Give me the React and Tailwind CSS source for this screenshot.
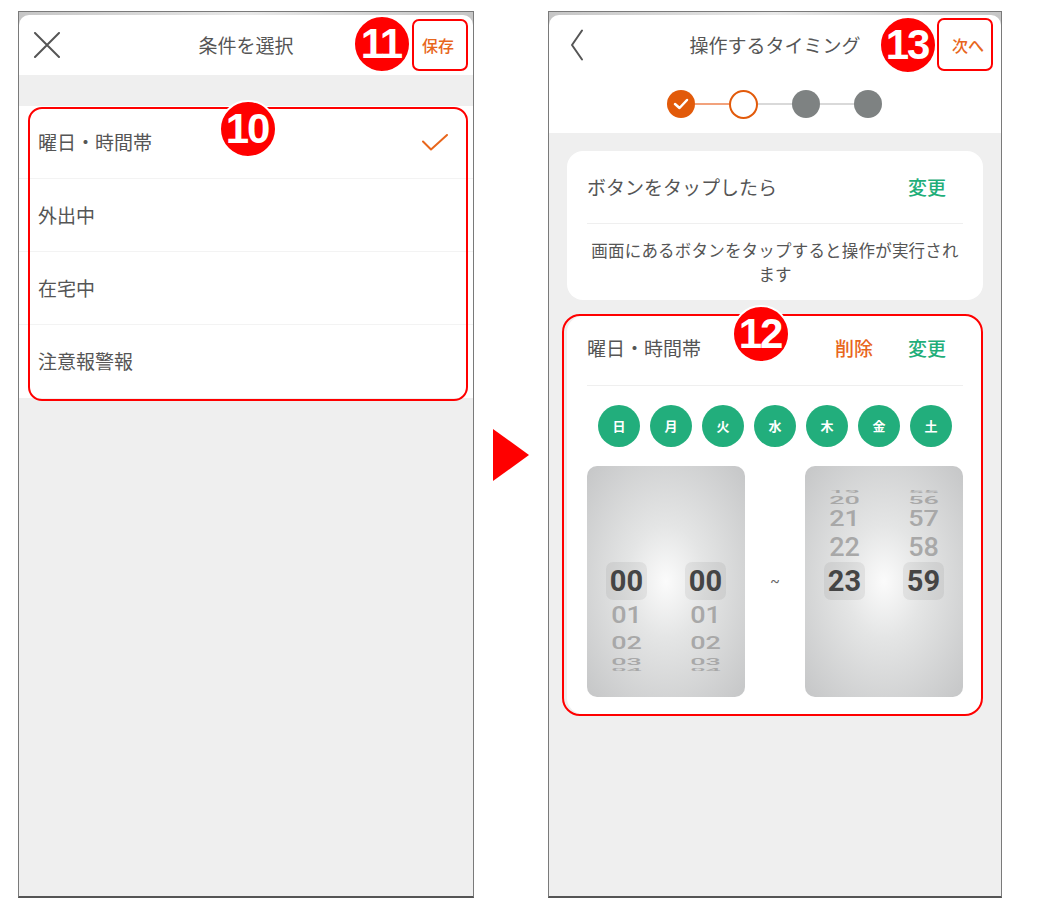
import React from 'react'

const OPTIONS = ['曜日・時間帯', '外出中', '在宅中', '注意報警報']
const DAYS = ['日', '月', '火', '水', '木', '金', '土']

// wheel rows: h = row height class, s = vertical squash class
const START_HOUR = [
  { t: '00', h: 'h-[38px]', sel: true },
  { t: '01', h: 'h-[30px]', s: 'scale-y-[0.9]' },
  { t: '02', h: 'h-[26px]', s: 'scale-y-[0.68]' },
  { t: '03', h: 'h-[12px]', s: 'scale-y-[0.35]' },
  { t: '04', h: 'h-[4px]', s: 'scale-y-[0.1]' },
]
const END_HOUR = [
  { t: '19', h: 'h-[4px]', s: 'scale-y-[0.1]' },
  { t: '20', h: 'h-[12px]', s: 'scale-y-[0.42]' },
  { t: '21', h: 'h-[26px]', s: 'scale-y-[0.82]' },
  { t: '22', h: 'h-[30px]', s: 'scale-y-[0.95]' },
  { t: '23', h: 'h-[38px]', sel: true },
]
const END_MIN = END_HOUR.map((r, i) => ({ ...r, t: String(55 + i) }))

function Badge({ n, className }) {
  return (
    <div
      className={`absolute z-20 w-[58px] h-[58px] rounded-full bg-[#ff0000] border-2 border-white flex items-center justify-center text-white font-bold text-[42px] leading-none tracking-[-2px] font-['Liberation_Sans',sans-serif] ${className}`}
    >
      <span className="-ml-[2px]">{n}</span>
    </div>
  )
}

function Frame({ className, children }) {
  return (
    <div
      className={`relative shrink-0 h-[887px] border border-[#7a7a7a] border-b-2 border-b-[#555] bg-[#efefef] flex flex-col overflow-hidden ${className}`}
    >
      <div className="bg-gradient-to-r from-[#c6c6c6] via-[#e9e9e9] to-[#c6c6c6] pt-[3px]">{children[0]}</div>
      {children.slice(1)}
    </div>
  )
}

function WheelColumn({ rows, pt }) {
  return (
    <div className={`w-1/2 flex flex-col items-center ${pt}`}>
      {rows.map((r, i) =>
        r.sel ? (
          <div
            key={i}
            className="w-[41px] h-[38px] rounded-[7px] bg-black/[0.06] flex items-center justify-center text-[29px] font-bold text-[#454545] leading-none"
          >
            {r.t}
          </div>
        ) : (
          <div key={i} className={`${r.h} flex items-center justify-center`}>
            <span className={`block text-[27px] font-medium text-[#a8a8a8] leading-none ${r.s}`}>{r.t}</span>
          </div>
        )
      )}
    </div>
  )
}

function Picker({ left, right, pt }) {
  return (
    <div className="w-[158px] h-[231px] shrink-0 rounded-[10px] overflow-hidden flex font-['Roboto',sans-serif] bg-[radial-gradient(ellipse_at_center,#fbfbfb_0%,#e4e5e5_35%,#c5c6c7_100%)]">
      <WheelColumn rows={left} pt={pt} />
      <WheelColumn rows={right} pt={pt} />
    </div>
  )
}

function Check({ className }) {
  return (
    <svg className={className} width="26" height="17" viewBox="0 0 26 17" fill="none">
      <polyline points="1,7.5 9,15.5 25,1" stroke="#e8661c" strokeWidth="2" strokeLinecap="round" strokeLinejoin="round" />
    </svg>
  )
}

function ConditionScreen() {
  return (
    <Frame className="w-[456px]">
      {/* header */}
      <div className="h-[60px] bg-white rounded-t-[10px] grid grid-cols-[1fr_auto_1fr] items-center">
        <div className="pl-[14px]">
          <svg width="28" height="26" viewBox="0 0 28 26" fill="none">
            <path d="M2 1 L26 25 M26 1 L2 25" stroke="#555" strokeWidth="2" strokeLinecap="round" />
          </svg>
        </div>
        <div className="text-[19px] text-[#555]">条件を選択</div>
        <div className="text-right pr-[19px] text-[16px] font-medium text-[#e8661c]">保存</div>
      </div>

      <div className="h-[31px]" />

      {/* options */}
      <div className="bg-white">
        {OPTIONS.map((o, i) => (
          <div
            key={o}
            className={`h-[73px] flex items-center justify-between pl-[19px] pr-[25px] ${i < OPTIONS.length - 1 ? 'border-b border-[#f3f3f3]' : ''}`}
          >
            <span className="text-[19px] text-[#555]">{o}</span>
            {i === 0 && <Check />}
          </div>
        ))}
      </div>

      {/* annotations */}
      <div className="absolute left-[9px] top-[95px] w-[440px] h-[294px] border-2 border-[#ff0000] rounded-[14px] z-10" />
      <Badge n="10" className="left-[200px] top-[88px]" />
      <div className="absolute left-[393px] top-[7px] w-[56px] h-[52px] border-2 border-[#ff0000] rounded-[7px] z-10" />
      <Badge n="11" className="left-[334px] top-[3px]" />
    </Frame>
  )
}

function Steps() {
  return (
    <div className="h-[58px] flex items-center justify-center pr-[2px]">
      <div className="w-[28px] h-[28px] rounded-full bg-[#e25a0a] flex items-center justify-center">
        <svg width="16" height="12" viewBox="0 0 16 12" fill="none">
          <polyline points="2,6 6.5,10 14,2" stroke="white" strokeWidth="2.5" strokeLinecap="round" strokeLinejoin="round" />
        </svg>
      </div>
      <div className="w-[34px] h-[2px] bg-[#f2a27c]" />
      <div className="w-[29px] h-[29px] rounded-full border-[2.5px] border-[#e25a0a] bg-white" />
      <div className="w-[34px] h-[2px] bg-[#d9d9d9]" />
      <div className="w-[28px] h-[28px] rounded-full bg-[#7e8282]" />
      <div className="w-[34px] h-[2px] bg-[#d9d9d9]" />
      <div className="w-[28px] h-[28px] rounded-full bg-[#7e8282]" />
    </div>
  )
}

function TimingScreen() {
  return (
    <Frame className="w-[454px]">
      {/* header */}
      <div className="bg-white rounded-t-[10px]">
        <div className="h-[60px] grid grid-cols-[1fr_auto_1fr] items-center">
          <div className="pl-[21px]">
            <svg width="14" height="32" viewBox="0 0 14 32" fill="none">
              <polyline points="12,1.5 2,16 12,30.5" stroke="#555" strokeWidth="2" strokeLinecap="round" strokeLinejoin="round" />
            </svg>
          </div>
          <div className="text-[19px] text-[#555]">操作するタイミング</div>
          <div className="text-right pr-[17px] text-[16px] font-medium text-[#e8661c]">次へ</div>
        </div>
        <Steps />
      </div>

      <div className="px-[18px] pt-[18px] flex flex-col gap-[16px]">
        {/* trigger card */}
        <div className="bg-white rounded-[16px] px-[20px]">
          <div className="h-[73px] flex items-center justify-between border-b border-[#efefef]">
            <span className="text-[19px] text-[#555]">ボタンをタップしたら</span>
            <span className="text-[19px] font-medium text-[#1fae79] pr-[17px]">変更</span>
          </div>
          <div className="h-[76px] flex flex-col items-center justify-center text-[16.5px] leading-[24px] text-[#555] text-center">
            <span className="whitespace-nowrap tracking-[0.2px]">画面にあるボタンをタップすると操作が実行され</span>
            <span>ます</span>
          </div>
        </div>

        {/* schedule card */}
        <div className="bg-white rounded-[16px] px-[20px] pb-[17px]">
          <div className="h-[70px] pb-[4px] flex items-center justify-between border-b border-[#efefef]">
            <span className="text-[19px] text-[#555]">曜日・時間帯</span>
            <div className="flex gap-[35px] pr-[17px] text-[19px] font-medium">
              <span className="text-[#e8661c]">削除</span>
              <span className="text-[#1fae79]">変更</span>
            </div>
          </div>
          <div className="pt-[19px] flex justify-center gap-[10px]">
            {DAYS.map((d) => (
              <div
                key={d}
                className="w-[42px] h-[42px] rounded-full bg-[#22ae7c] flex items-center justify-center text-white text-[13px] font-bold"
              >
                {d}
              </div>
            ))}
          </div>
          <div className="pt-[19px] flex items-center">
            <Picker left={START_HOUR} right={START_HOUR} pt="pt-[96px]" />
            <div className="flex-1 text-center text-[14px] text-[#666] font-['Roboto',sans-serif]">~</div>
            <Picker left={END_HOUR} right={END_MIN} pt="pt-[24px]" />
          </div>
        </div>
      </div>

      {/* annotations */}
      <div className="absolute left-[388px] top-[6px] w-[56px] h-[53px] border-2 border-[#ff0000] rounded-[7px] z-10" />
      <Badge n="13" className="left-[330px] top-[4px]" />
      <div className="absolute left-[13px] top-[302px] w-[421px] h-[402px] border-2 border-[#ff0000] rounded-[18px] z-10" />
      <Badge n="12" className="left-[183px] top-[293px]" />
    </Frame>
  )
}

export default function App() {
  return (
    <div className="w-[1058px] h-[906px] bg-white flex items-start pl-[18px] pt-[11px] font-['Noto_Sans_CJK_JP','Noto_Sans',sans-serif]">
      <ConditionScreen />
      <div className="w-[74px] h-[887px] shrink-0 flex items-center justify-center">
        <svg width="36" height="52" viewBox="0 0 36 52">
          <polygon points="0,0 36,26 0,52" fill="#ff0000" />
        </svg>
      </div>
      <TimingScreen />
    </div>
  )
}
